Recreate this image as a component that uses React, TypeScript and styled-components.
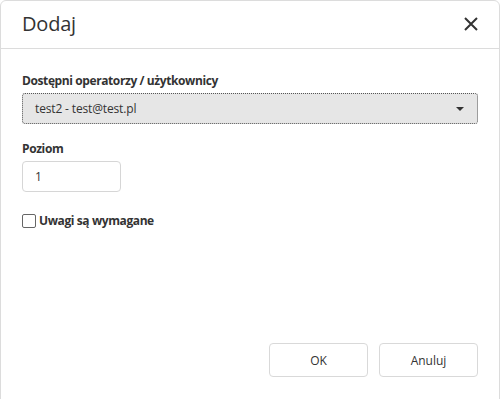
import React from "react";
import styled, { createGlobalStyle } from "styled-components";

const Global = createGlobalStyle`
  html, body { margin: 0; padding: 0; background: #fff; }
  body { font-family: "Open Sans", "Noto Sans", sans-serif; color: #333; }
  * { box-sizing: border-box; }
`;

const Dialog = styled.div`
  width: 500px;
  height: 420px;
  border: 1px solid #dcdcdc;
  border-radius: 6px;
  background: #fff;
  display: flex;
  flex-direction: column;
  overflow: hidden;
`;

const Header = styled.div`
  height: 48px;
  border-bottom: 1px solid #dcdcdc;
  display: flex;
  align-items: center;
  justify-content: space-between;
  padding: 0 21px 0 21px;
`;

const Title = styled.h1`
  margin: 0;
  font-size: 20px;
  font-weight: 400;
  letter-spacing: -0.2px;
  color: #333;
  line-height: 1;
  padding-bottom: 1px;
`;

const CloseButton = styled.button`
  border: 0;
  background: transparent;
  padding: 0;
  width: 16px;
  height: 16px;
  display: flex;
  align-items: center;
  justify-content: center;
  cursor: pointer;
  margin-right: -1px;
  margin-bottom: 1px;
`;

const Body = styled.div`
  flex: 1;
  padding: 24px 21px 0 21px;
  display: flex;
  flex-direction: column;
`;

const Label = styled.label`
  display: block;
  font-size: 12px;
  font-weight: 700;
  letter-spacing: -0.4px;
  color: #333;
  line-height: 16px;
  margin-bottom: 4px;
`;

const Field = styled.div<{ $mb: number }>`
  margin-bottom: ${(p) => p.$mb}px;
`;

const Select = styled.div`
  height: 31px;
  width: 456px;
  background: #e6e6e6;
  border: 1px dotted #555;
  border-radius: 3px;
  display: flex;
  align-items: center;
  justify-content: space-between;
  padding: 0 12px 0 12px;
  font-size: 12px;
  letter-spacing: -0.15px;
  color: #333;
`;

const Caret = styled.span`
  width: 0;
  height: 0;
  border-left: 4px solid transparent;
  border-right: 4px solid transparent;
  border-top: 4px solid #333;
  margin-right: 1px;
`;

const Input = styled.input`
  width: 99px;
  height: 31px;
  border: 1px solid #d6d6d6;
  border-radius: 4px;
  padding: 0 12px;
  font-family: inherit;
  font-size: 12px;
  color: #333;
  outline: none;
`;

const CheckRow = styled.label`
  display: flex;
  align-items: center;
  gap: 3px;
  font-size: 12px;
  font-weight: 700;
  letter-spacing: -0.4px;
  color: #333;
`;

const Box = styled.span`
  width: 14px;
  height: 14px;
  border: 1px solid #666;
  border-radius: 2px;
  background: #fff;
  display: inline-block;
`;

const Footer = styled.div`
  display: flex;
  justify-content: flex-end;
  gap: 11px;
  padding: 0 21px 0 21px;
  margin-bottom: 42px;
`;

const Button = styled.button`
  width: 99px;
  height: 34px;
  border: 1px solid #d9d9d9;
  border-radius: 4px;
  background: #fff;
  font-family: inherit;
  font-size: 12px;
  color: #333;
  cursor: pointer;
`;

export default function App() {
  return (
    <>
      <Global />
      <Dialog>
        <Header>
          <Title>Dodaj</Title>
          <CloseButton aria-label="Zamknij">
            <svg width="14" height="14" viewBox="0 0 14 14">
              <path d="M1 1 L13 13 M13 1 L1 13" stroke="#333" strokeWidth="2" />
            </svg>
          </CloseButton>
        </Header>
        <Body>
          <Field $mb={17}>
            <Label>Dostępni operatorzy / użytkownicy</Label>
            <Select>
              <span>test2 - test@test.pl</span>
              <Caret />
            </Select>
          </Field>
          <Field $mb={20}>
            <Label>Poziom</Label>
            <Input defaultValue="1" />
          </Field>
          <CheckRow>
            <Box />
            Uwagi są wymagane
          </CheckRow>
        </Body>
        <Footer>
          <Button>OK</Button>
          <Button>Anuluj</Button>
        </Footer>
      </Dialog>
    </>
  );
}
